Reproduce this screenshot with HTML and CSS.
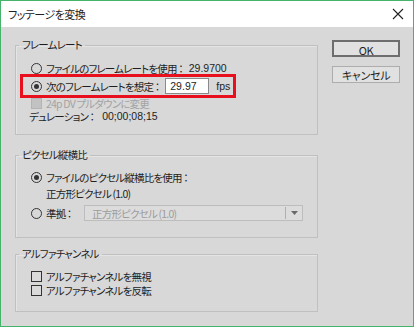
FILE: index.html
```html
<!DOCTYPE html>
<html lang="ja">
<head>
    <meta charset="UTF-8">
    <meta name="viewport" content="width=device-width, initial-scale=1.0">
    <title>フッテージを変換</title>
    <link rel="stylesheet" href="styles.css">
</head>
<body>
    <div class="dialog">
        <div class="titlebar">
            <span class="title">フッテージを変換</span>
            <svg class="close" width="12" height="12" viewBox="0 0 12 12">
                <path d="M1 1 L11 11 M11 1 L1 11" stroke="#222" stroke-width="1.1" fill="none"/>
            </svg>
        </div>

        <div class="content">
            <div class="main">
                <fieldset class="group group-rate">
                    <legend>フレームレート</legend>
                    <div class="group-body">
                        <div class="row row-tall">
                            <span class="radio"></span>
                            <span>ファイルのフレームレートを使用 ：</span>
                            <span class="num value">29.9700</span>
                        </div>
                        <div class="highlight">
                            <div class="row row-input">
                                <span class="radio checked"></span>
                                <span>次のフレームレートを想定 ：</span>
                                <span class="textbox num">29.97</span>
                                <span class="num unit">fps</span>
                            </div>
                        </div>
                        <div class="row row-check disabled">
                            <span class="check"></span>
                            <span>24p DV プルダウンに変更</span>
                        </div>
                        <div class="row row-duration">
                            <span>デュレーション ：</span>
                            <span class="num value">00;00;08;15</span>
                        </div>
                    </div>
                </fieldset>

                <fieldset class="group group-pixel">
                    <legend>ピクセル縦横比</legend>
                    <div class="group-body">
                        <div class="row row-first">
                            <span class="radio checked"></span>
                            <span>ファイルのピクセル縦横比を使用 ：</span>
                        </div>
                        <div class="row row-sub">
                            <span>正方形ピクセル (1.0)</span>
                        </div>
                        <div class="row row-select">
                            <span class="radio"></span>
                            <span class="select-label">準拠 ：</span>
                            <div class="select">
                                <span class="select-text">正方形ピクセル (1.0)</span>
                                <span class="select-arrow">
                                    <svg width="7" height="4" viewBox="0 0 7 4"><path d="M0 0 H7 L3.5 4 Z" fill="#6a6a6a"/></svg>
                                </span>
                            </div>
                        </div>
                    </div>
                </fieldset>

                <fieldset class="group group-alpha">
                    <legend>アルファチャンネル</legend>
                    <div class="group-body">
                        <div class="row">
                            <span class="check"></span>
                            <span>アルファチャンネルを無視</span>
                        </div>
                        <div class="row">
                            <span class="check"></span>
                            <span>アルファチャンネルを反転</span>
                        </div>
                    </div>
                </fieldset>
            </div>

            <div class="buttons">
                <button class="btn btn-default">OK</button>
                <button class="btn">キャンセル</button>
            </div>
        </div>
    </div>
</body>
</html>
```

FILE: styles.css
```css
body {
    margin: 0;
    padding: 0;
    font-family: "Noto Sans CJK JP", "Noto Sans", sans-serif;
    font-size: 10.5px;
    line-height: 13px;
    letter-spacing: -0.8px;
    font-feature-settings: "palt";
    color: #1e1e1e;
}
.dialog {
    width: 414px;
    height: 327px;
    box-sizing: border-box;
    border: 1px solid #45b36b;
    background: #d8d8d8;
}
.titlebar {
    height: 26px;
    background: #fff;
    display: flex;
    align-items: center;
    justify-content: space-between;
    padding: 0 9px 0 7px;
}
.title {
    font-size: 11px;
    letter-spacing: -0.5px;
    color: #222;
}
.content {
    display: flex;
    align-items: flex-start;
}
.main {
    width: 303px;
    margin-left: 14px;
}
.group {
    margin: 0;
    padding: 0;
    border: 1px solid #c0c0c0;
    box-shadow: inset 1px 1px 0 #e4e4e4;
    min-width: 0;
}
.group legend {
    margin-left: 3px;
    padding: 0 3px;
    line-height: 14px;
    height: 14px;
}
.group-rate {
    margin-top: 11px;
}
.group-rate .group-body {
    padding: 8px 0 11px 0;
}
.group-pixel {
    margin-top: 13px;
}
.group-pixel .group-body {
    padding: 8px 0 15px 0;
}
.group-alpha {
    margin-top: 9px;
}
.group-alpha .group-body {
    padding: 8px 0 14px 0;
}
.row {
    display: flex;
    align-items: center;
    height: 14px;
    padding-left: 15px;
    white-space: nowrap;
}
.row-tall {
    height: 17px;
}
.highlight {
    width: 216px;
    box-sizing: border-box;
    margin: -3px 0 0 4px;
    border: 3px solid #e8101c;
}
.row-input {
    height: 18px;
    padding-left: 8px;
}
.row-check {
    margin-top: -2px;
}
.row-duration {
    height: 13px;
    padding-left: 13px;
}
.row-first {
    height: 15px;
}
.row-sub {
    height: 16px;
    padding-left: 30px;
}
.row-select {
    height: 18px;
    margin-top: 3px;
}
.radio, .check {
    width: 9px;
    height: 9px;
    border: 1px solid #333;
    margin-right: 4px;
    flex: none;
    box-sizing: content-box;
}
.radio {
    border-radius: 50%;
    display: flex;
    align-items: center;
    justify-content: center;
}
.radio.checked::after {
    content: "";
    width: 5px;
    height: 5px;
    border-radius: 50%;
    background: #333;
}
.check {
    background: #dadada;
}
.disabled {
    color: #a3a3a3;
}
.disabled .check {
    background: #c2c2c2;
    border-color: #b4b4b4;
}
.num {
    font-family: "Liberation Sans", Arial, sans-serif;
    font-size: 10.5px;
    letter-spacing: 0;
}
.value {
    margin-left: 6px;
}
.row-duration .value {
    margin-left: 8px;
}
.textbox {
    width: 44px;
    height: 16px;
    box-sizing: border-box;
    margin-left: 6px;
    padding-left: 4px;
    border: 1px solid #8a8a8a;
    background: #fff;
    display: flex;
    align-items: center;
}
.unit {
    margin-left: 7px;
}
.select-label {
    width: 38px;
}
.select {
    width: 219px;
    height: 16px;
    box-sizing: border-box;
    border: 1px solid #bdbdbd;
    background: #dcdcdc;
    display: flex;
    align-items: center;
    color: #9c9c9c;
}
.select-text {
    flex: 1;
    padding-left: 7px;
}
.select-arrow {
    width: 16px;
    height: 12px;
    border-left: 1px solid #b0b0b0;
    display: flex;
    align-items: center;
    justify-content: center;
}
.buttons {
    display: flex;
    flex-direction: column;
    gap: 9px;
    margin: 13px 0 0 14px;
}
.btn {
    width: 68px;
    height: 17px;
    padding: 0;
    font-family: inherit;
    font-size: 11px;
    letter-spacing: -0.3px;
    font-feature-settings: "palt";
    color: #1e1e1e;
    background: #e1e1e1;
    border: 1px solid #adadad;
}
.btn-default {
    border: 2px solid #6e6e6e;
}
```
